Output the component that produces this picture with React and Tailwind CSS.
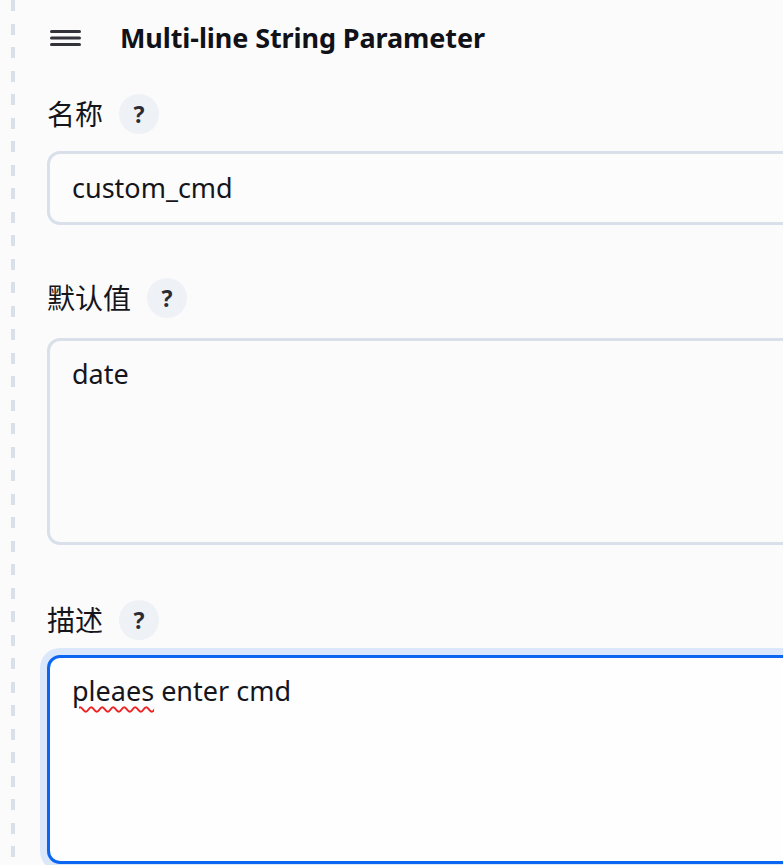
const Help = () => (
    <span className="ml-4 flex h-[40px] w-[40px] items-center justify-center rounded-full bg-[#eef1f5] text-[23px] font-bold leading-none text-[#2b2b33]">
        ?
    </span>
);

const Label = ({ children, className = '' }) => (
    <div className={`flex h-[40px] items-center ${className}`}>
        <span className="text-[28px] leading-none text-[#15151c]">{children}</span>
        <Help />
    </div>
);

const App = () => {
    return (
        <div
            className="flex h-[865px] w-[783px] overflow-hidden bg-[#fbfbfb] text-[#15151c]"
            style={{ fontFamily: '"Noto Sans", "Noto Sans CJK SC", sans-serif' }}
        >
            {/* dashed section rail */}
            <div className="ml-[11px] w-[4px] shrink-0 bg-[repeating-linear-gradient(to_bottom,#dae0ea_0_11px,transparent_11px_23.5px)]" />

            <div className="ml-[32px] flex flex-col">
                <div className="mt-[18px] flex h-[40px] items-center">
                    <svg width="31" height="20" viewBox="0 0 31 20" className="ml-[3px]">
                        <rect x="0" y="2" width="31" height="3" rx="1.5" fill="#33333a" />
                        <rect x="0" y="8.5" width="31" height="3" rx="1.5" fill="#33333a" />
                        <rect x="0" y="15" width="31" height="3" rx="1.5" fill="#33333a" />
                    </svg>
                    <h1 className="ml-[39px] text-[27px] font-bold tracking-[-0.1px] text-[#111118]">
                        Multi-line String Parameter
                    </h1>
                </div>

                <Label className="mt-[36px]">名称</Label>
                <div className="mt-[17px] flex h-[74px] w-[780px] items-center rounded-[13px] border-[3px] border-[#d9e0ea] bg-[#fcfcfc] px-[22px] text-[27px]">
                    custom_cmd
                </div>

                <Label className="mt-[53px]">默认值</Label>
                <div className="mt-[20px] h-[207px] w-[780px] rounded-[13px] border-[3px] border-[#d9e0ea] bg-[#fbfbfb] px-[22px] pt-[13px] text-[27px]">
                    date
                </div>

                <Label className="mt-[55px]">描述</Label>
                <div className="mt-[15px] h-[209px] w-[780px] rounded-[13px] border-[3px] border-[#0d66f2] bg-[#fefefe] px-[22px] pt-[13px] text-[27px] shadow-[0_0_0_7px_#dbe7fb]">
                    <span className="underline decoration-wavy decoration-[#e22] decoration-[1.5px] underline-offset-[5px]">pleaes</span> enter cmd
                </div>
            </div>
        </div>
    );
};

export default App;
